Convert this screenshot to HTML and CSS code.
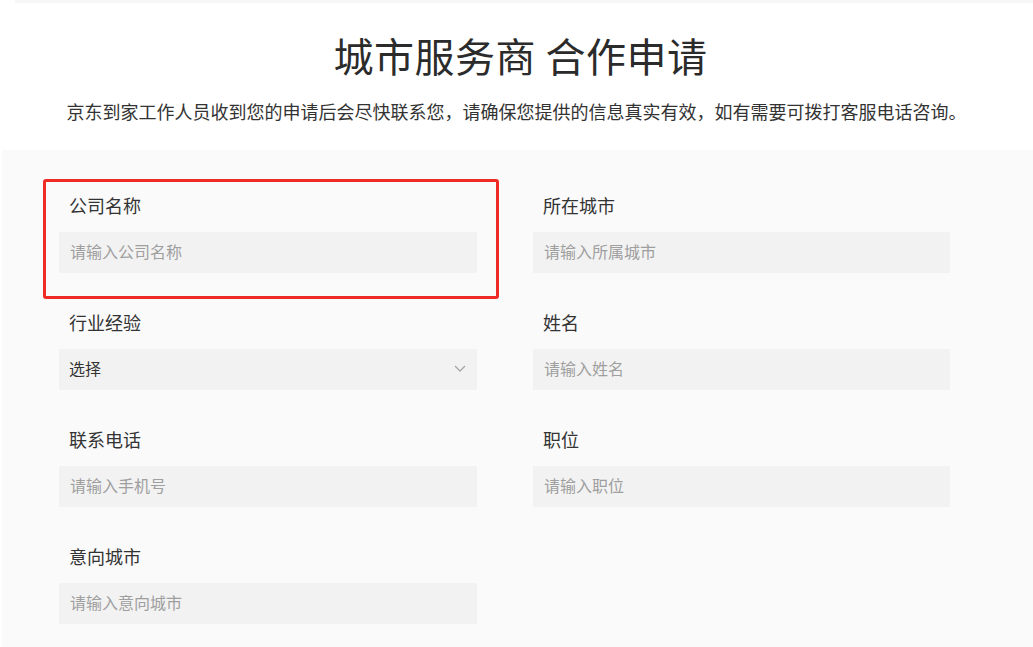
FILE: index.html
```html
<!DOCTYPE html>
<html lang="zh-CN">

<head>
    <meta charset="UTF-8">
    <meta name="viewport" content="width=device-width, initial-scale=1.0">
    <title>城市服务商 合作申请</title>
    <link rel="stylesheet" href="styles.css">
</head>

<body>
    <div class="topbar"></div>

    <header class="intro">
        <h1>城市服务商 合作申请</h1>
        <p>京东到家工作人员收到您的申请后会尽快联系您，请确保您提供的信息真实有效，如有需要可拨打客服电话咨询。</p>
    </header>

    <section class="apply">
        <form class="apply-form">
            <div class="field marked">
                <label for="company">公司名称</label>
                <input id="company" type="text" placeholder="请输入公司名称">
                <span class="mark"></span>
            </div>
            <div class="field">
                <label for="city">所在城市</label>
                <input id="city" type="text" placeholder="请输入所属城市">
            </div>

            <div class="field">
                <label for="exp">行业经验</label>
                <div class="select-wrap">
                    <select id="exp">
                        <option>选择</option>
                        <option>1年以下</option>
                        <option>1-3年</option>
                        <option>3年以上</option>
                    </select>
                    <svg class="chevron" width="12" height="7" viewBox="0 0 12 7">
                        <path d="M1 1 L6 6 L11 1" fill="none" stroke="#a6a6a6" stroke-width="1.3" />
                    </svg>
                </div>
            </div>
            <div class="field">
                <label for="name">姓名</label>
                <input id="name" type="text" placeholder="请输入姓名">
            </div>

            <div class="field">
                <label for="phone">联系电话</label>
                <input id="phone" type="text" placeholder="请输入手机号">
            </div>
            <div class="field">
                <label for="post">职位</label>
                <input id="post" type="text" placeholder="请输入职位">
            </div>

            <div class="field">
                <label for="target">意向城市</label>
                <input id="target" type="text" placeholder="请输入意向城市">
            </div>
        </form>
    </section>
</body>

</html>
```

FILE: styles.css
```css
* {
    box-sizing: border-box;
}

body {
    margin: 0;
    background-color: #fff;
    color: #333;
    font-family: "Noto Sans CJK SC", "Microsoft YaHei", sans-serif;
    overflow: hidden;
}

.topbar {
    height: 3px;
    margin-left: 15px;
    background-color: #f6f6f6;
}

.intro {
    text-align: center;
}

.intro h1 {
    margin: 26px 0 0;
    padding-left: 8px;
    font-size: 40px;
    line-height: 52px;
    font-weight: normal;
    letter-spacing: 0.5px;
    color: #2b2b2b;
}

.intro p {
    margin: 18px 0 27px;
    font-size: 18px;
    line-height: 24px;
    color: #333;
}

.apply {
    margin-left: 2px;
    padding: 43px 0 23px 57px;
    background-color: #fafafa;
}

.apply-form {
    display: grid;
    grid-template-columns: 418px 417px;
    column-gap: 56px;
    row-gap: 37px;
}

.field {
    position: relative;
    display: flex;
    flex-direction: column;
}

.field label {
    display: block;
    margin-bottom: 15px;
    padding-left: 10px;
    font-size: 18px;
    line-height: 24px;
    color: #333;
}

.field input,
.field select {
    width: 100%;
    height: 41px;
    margin: 0;
    padding: 0 11px 3px;
    border: none;
    border-radius: 0;
    outline: none;
    background-color: #f2f2f2;
    font-family: inherit;
    font-size: 16px;
    color: #333;
}

.field input::placeholder {
    color: #9f9f9f;
}

.select-wrap {
    position: relative;
}

.field select {
    appearance: none;
    -webkit-appearance: none;
    padding-left: 10px;
}

.chevron {
    position: absolute;
    right: 11px;
    top: 16px;
    pointer-events: none;
}

.mark {
    position: absolute;
    top: -14px;
    left: -16px;
    right: -22px;
    bottom: -26px;
    border: 3px solid #ee2b24;
    border-radius: 3px;
    pointer-events: none;
}
```
